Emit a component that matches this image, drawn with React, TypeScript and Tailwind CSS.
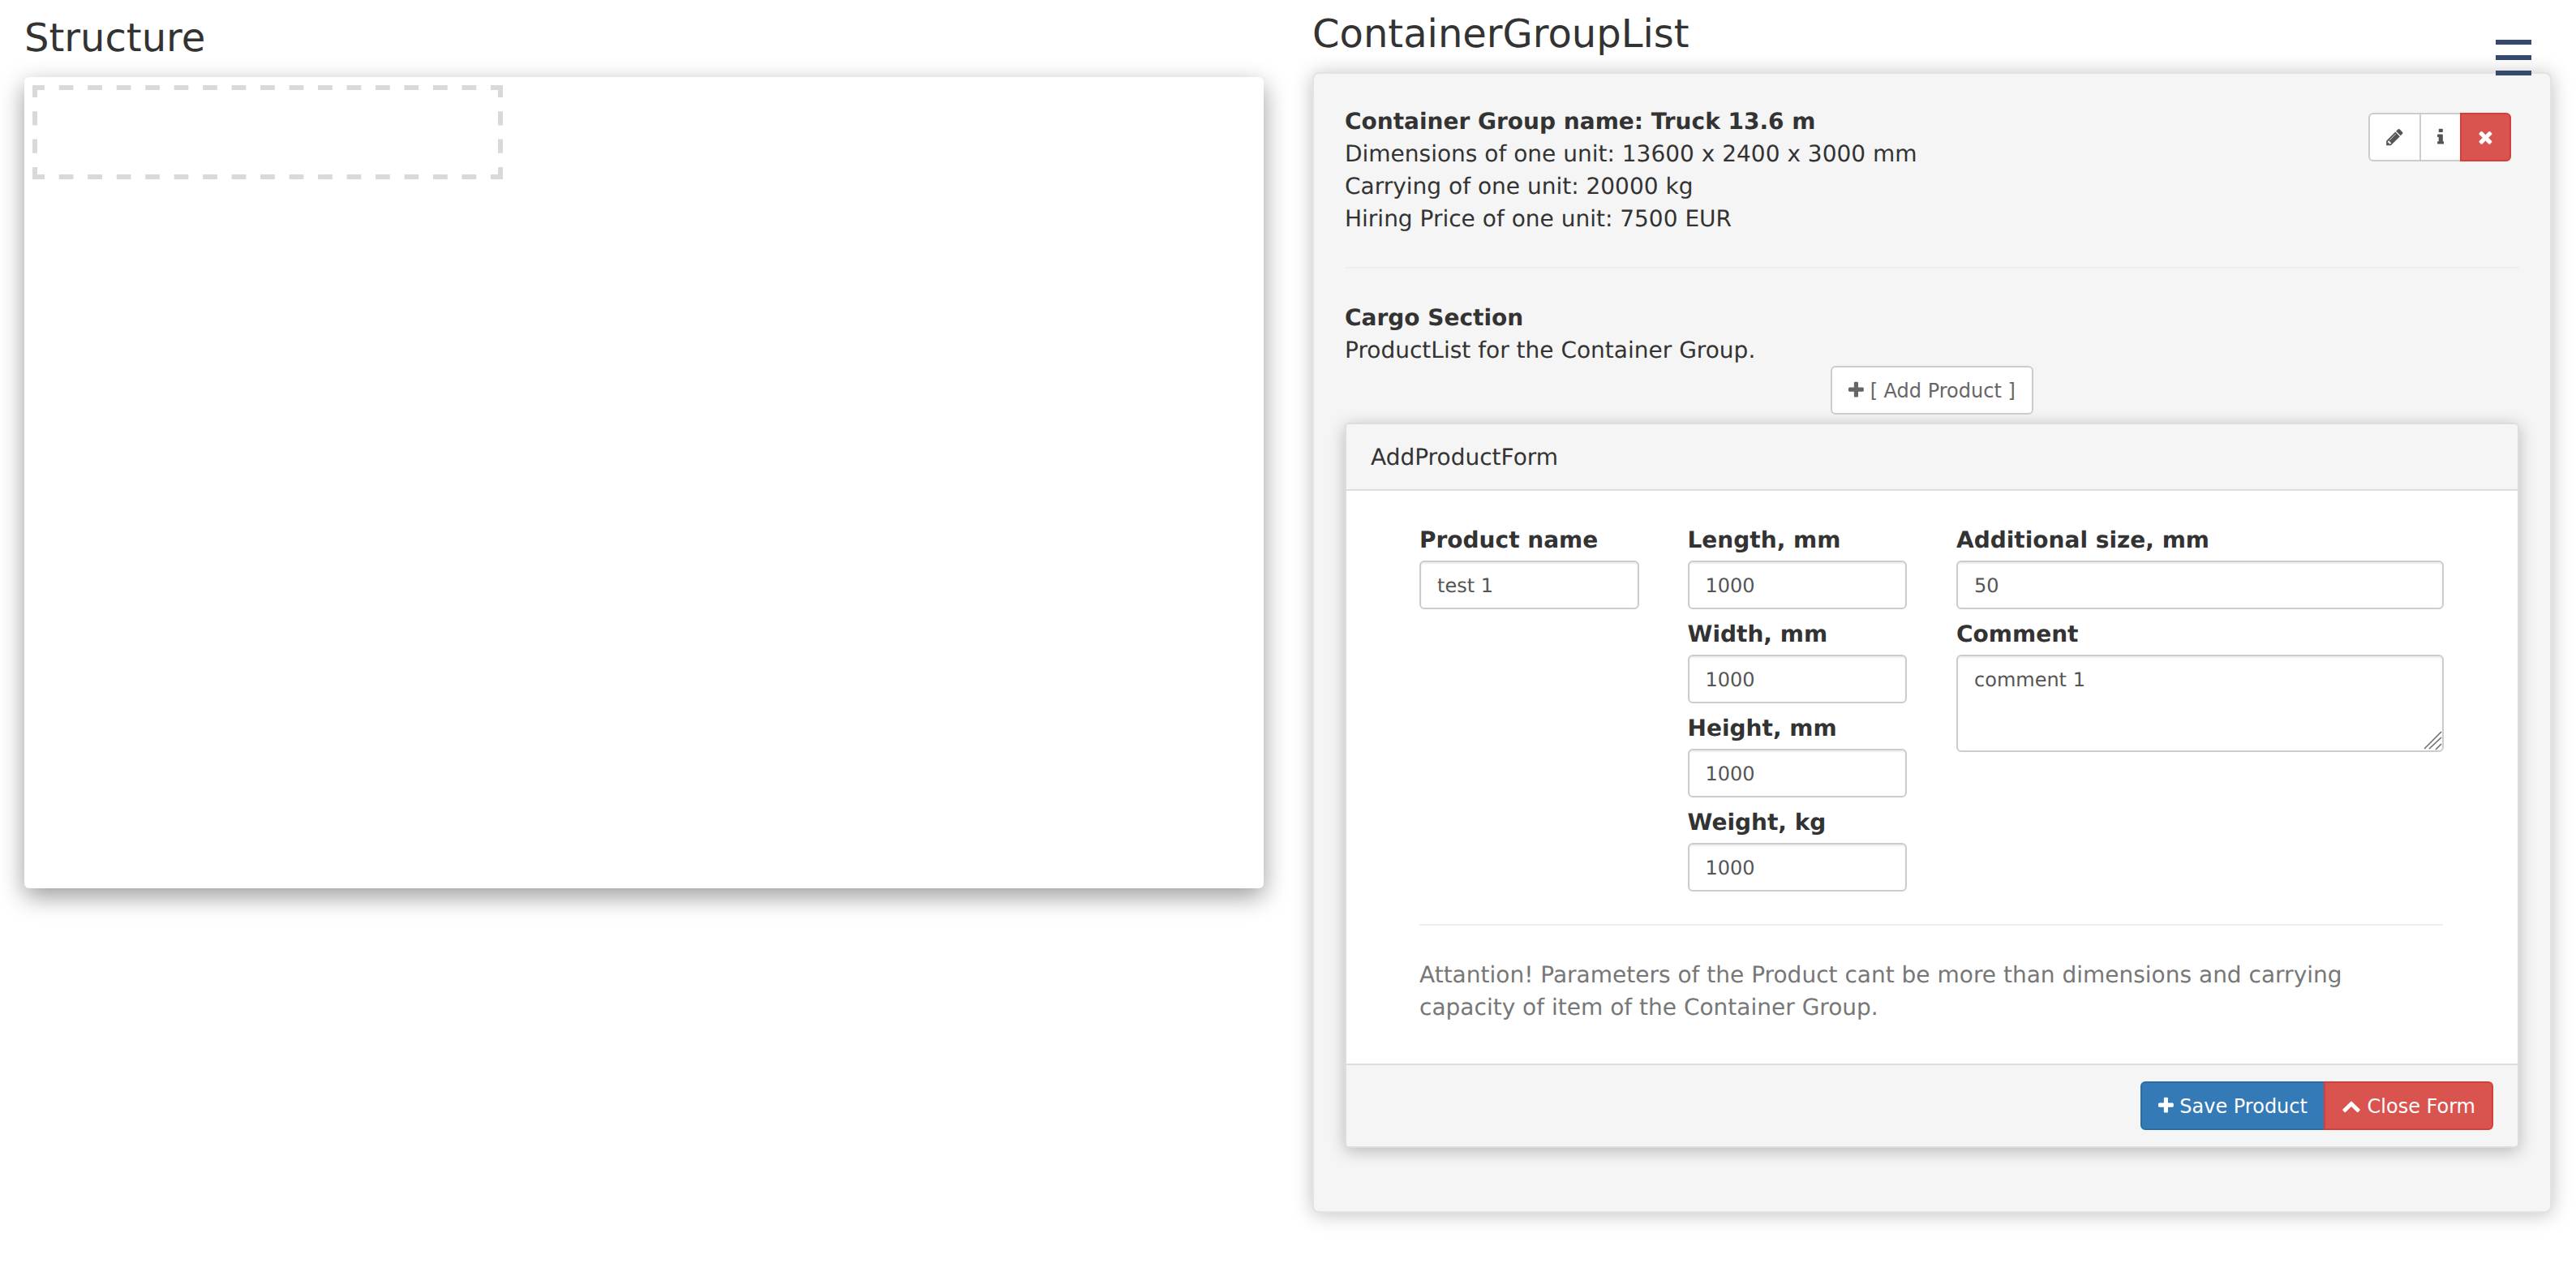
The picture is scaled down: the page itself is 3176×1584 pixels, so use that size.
import React from "react";

const P = {
  pencil: { vb: "118 0 1536 1792", w: 20.57, d: "M491 1536l91-91-235-235-91 91v107h128v128h107zm523-928q0-22-22-22-10 0-17 7l-542 542q-7 7-7 17 0 22 22 22 10 0 17-7l542-542q7-7 7-17zm-54-192l416 416-832 832h-416v-416zm683 96q0 53-37 90l-166 166-416-416 166-165q36-38 90-38 53 0 91 38l235 234q37 39 37 91z" },
  info: { vb: "576 0 640 1792", w: 8.57, d: "M1216 1344v128q0 26-19 45t-45 19h-512q-26 0-45-19t-19-45v-128q0-26 19-45t45-19h64v-384h-64q-26 0-45-19t-19-45v-128q0-26 19-45t45-19h384q26 0 45 19t19 45v576h64q26 0 45 19t19 45zm-128-1152v192q0 26-19 45t-45 19h-256q-26 0-45-19t-19-45v-192q0-26 19-45t45-19h256q26 0 45 19t19 45z" },
  times: { vb: "192 0 1408 1792", w: 18.86, d: "M1490 1322q0 40-28 68l-136 136q-28 28-68 28t-68-28l-294-294-294 294q-28 28-68 28t-68-28l-136-136q-28-28-28-68t28-68l294-294-294-294q-28-28-28-68t28-68l136-136q28-28 68-28t68 28l294 294 294-294q28-28 68-28t68 28l136 136q28 28 28 68t-28 68l-294 294 294 294q28 28 28 68z" },
  plus: { vb: "192 0 1408 1792", w: 18.86, d: "M1600 736v192q0 40-28 68t-68 28h-416v416q0 40-28 68t-68 28h-192q-40 0-68-28t-28-68v-416h-416q-40 0-68-28t-28-68v-192q0-40 28-68t68-28h416v-416q0-40 28-68t68-28h192q40 0 68 28t28 68v416h416q40 0 68 28t28 68z" },
  up: { vb: "0 0 1792 1792", w: 24, d: "M1683 1331l-166 165q-19 19-45 19t-45-19l-531-531-531 531q-19 19-45 19t-45-19l-166-165q-19-19-19-45.5t19-45.5l742-741q19-19 45-19t45 19l742 741q19 19 19 45.5t-19 45.5z" },
};

function Icon({ name }: { name: keyof typeof P }) {
  const i = P[name];
  return (
    <svg viewBox={i.vb} width={i.w} height={24} fill="currentColor" className="shrink-0">
      <path d={i.d} />
    </svg>
  );
}

const geo = "[text-rendering:geometricPrecision]";

function Field({ label, value, first }: { label: string; value: string; first?: boolean }) {
  return (
    <div className={first ? "" : "mt-[10px]"}>
      <label className="block h-[46px] pt-[1px] font-bold text-[28px] leading-[40px]">{label}</label>
      <input
        className="block w-full h-[60px] border-2 border-[#ccc] rounded-[6px] bg-white px-[20px] pt-[2px] text-[24px] leading-[36px] text-[#555] outline-none shadow-[inset_0_2px_2px_rgba(0,0,0,0.075)] [text-rendering:geometricPrecision]"
        defaultValue={value}
        readOnly
      />
    </div>
  );
}

export default function App() {
  return (
    <div className={`relative min-h-[1584px] bg-white flex font-['DejaVu_Sans',sans-serif] text-[#333] text-[28px] leading-[40px] ${geo}`}>
      <div className="absolute top-[49px] right-[55px] z-10 w-[44px] flex flex-col gap-[13px]">
        <span className="block h-[6px] bg-[#34496d]" />
        <span className="block h-[6px] bg-[#34496d]" />
        <span className="block h-[6px] bg-[#34496d]" />
      </div>

      <section className="w-[1588px] shrink-0 px-[30px] pt-[21px]">
        <h3 className="text-[48px] leading-[53px] mb-[21px] font-normal">Structure</h3>
        <div className="h-[1000px] bg-white rounded-[6px] p-[10px] shadow-[0_10px_30px_rgba(0,0,0,0.4)]">
          <svg width="580" height="116" className="block" stroke="#d9d9d9" strokeWidth="6" fill="none">
            <line x1="0" y1="3" x2="580" y2="3" strokeDasharray="17.74 17.74" strokeDashoffset="2.74" />
            <line x1="0" y1="113" x2="580" y2="113" strokeDasharray="17.74 17.74" strokeDashoffset="2.74" />
            <line x1="3" y1="0" x2="3" y2="116" strokeDasharray="17.2 17.2" strokeDashoffset="2.2" />
            <line x1="577" y1="0" x2="577" y2="116" strokeDasharray="17.2 17.2" strokeDashoffset="2.2" />
          </svg>
        </div>
      </section>

      <section className="flex-1 px-[30px] pt-[16px] pb-[89px]">
        <h3 className="text-[48px] leading-[53px] mb-[20px] font-normal">ContainerGroupList</h3>
        <div className="bg-[#f5f5f5] border-2 border-[#e3e3e3] rounded-[8px] p-[38px] shadow-[0_2px_24px_rgba(0,0,0,0.25)]">
          <div className="flex justify-between">
            <div className="pt-[1px]">
              <div className="font-bold">Container Group name: Truck 13.6 m</div>
              <div>Dimensions of one unit: 13600 x 2400 x 3000 mm</div>
              <div>Carrying of one unit: 20000 kg</div>
              <div>Hiring Price of one unit: 7500 EUR</div>
            </div>
            <div className="flex mt-[10px] mr-[10px] h-[60px]">
              <button className="flex items-center px-[20px] border-2 border-[#ccc] bg-white text-[#555] rounded-l-[6px]">
                <Icon name="pencil" />
              </button>
              <button className="-ml-[2px] flex items-center px-[20px] border-2 border-[#ccc] bg-white text-[#555]">
                <Icon name="info" />
              </button>
              <button className="-ml-[2px] flex items-center px-[20px] border-2 border-[#d43f3a] bg-[#d9534f] text-white rounded-r-[6px]">
                <Icon name="times" />
              </button>
            </div>
          </div>

          <hr className="mt-[39px] mb-[41px] border-0 border-t-2 border-[#eeeeee]" />

          <div className="font-bold">Cargo Section</div>
          <div>ProductList for the Container Group.</div>

          <div className="flex justify-center -mt-[1px] mb-[10px]">
            <button className="flex items-center gap-[7.6px] h-[60px] px-[20px] border-2 border-[#ccc] bg-white text-[#666] text-[24px] leading-[36px] rounded-[6px]">
              <Icon name="plus" />
              <span className="pt-[2px]">[ Add Product ]</span>
            </button>
          </div>

          <div className="mb-[40px] rounded-[6px] border-2 border-[#ddd] bg-white shadow-[0_4px_20px_rgba(0,0,0,0.25)]">
            <div className="h-[82px] bg-[#f5f5f5] border-b-2 border-[#ddd] rounded-t-[4px] px-[30px] pt-[21px]">AddProductForm</div>

            <div className="pl-[90px] pr-[91px] pt-[40px] pb-[49px]">
              <div className="flex">
                <div className="w-[270.5px] mr-[60px]">
                  <Field first label="Product name" value="test 1" />
                </div>
                <div className="w-[270.5px] mr-[61px]">
                  <Field first label="Length, mm" value="1000" />
                  <Field label="Width, mm" value="1000" />
                  <Field label="Height, mm" value="1000" />
                  <Field label="Weight, kg" value="1000" />
                </div>
                <div className="w-[601px]">
                  <Field first label="Additional size, mm" value="50" />
                  <div className="mt-[10px]">
                    <label className="block h-[46px] pt-[1px] font-bold">Comment</label>
                    <div className="relative">
                      <textarea
                        className="block w-full h-[120px] resize-none border-2 border-[#ccc] rounded-[6px] bg-white px-[20px] pt-[11px] pb-[9px] text-[24px] leading-[36px] text-[#555] outline-none shadow-[inset_0_2px_2px_rgba(0,0,0,0.075)] [text-rendering:geometricPrecision]"
                        defaultValue="comment 1"
                        readOnly
                      />
                      <svg width="24" height="24" className="absolute right-[2px] bottom-[2px] pointer-events-none" stroke="#6b6b6b" strokeWidth="1.6" fill="none">
                        <line x1="2" y1="22" x2="23" y2="1" />
                        <line x1="8" y1="22" x2="23" y2="8" />
                        <line x1="16" y1="23" x2="23" y2="16" />
                      </svg>
                    </div>
                  </div>
                </div>
              </div>
              <hr className="mt-[40px] mb-[41px] mr-[1px] border-0 border-t-2 border-[#eeeeee]" />
              <p className="text-[#777]">
                Attantion! Parameters of the Product cant be more than dimensions and carrying capacity of item of the Container Group.
              </p>
            </div>

            <div className="h-[102px] flex justify-end bg-[#f5f5f5] border-t-2 border-[#ddd] rounded-b-[4px] px-[30px] py-[20px] text-[24px] leading-[36px] text-white">
              <button className="flex items-center gap-[7.6px] h-[60px] px-[20px] border-2 border-[#2e6da4] bg-[#337ab7] rounded-l-[6px]">
                <Icon name="plus" />
                <span className="pt-[2px]">Save Product</span>
              </button>
              <button className="-ml-[2px] flex items-center gap-[7.6px] h-[60px] px-[20px] border-2 border-[#d43f3a] bg-[#d9534f] rounded-r-[6px]">
                <Icon name="up" />
                <span className="pt-[2px]">Close Form</span>
              </button>
            </div>
          </div>
        </div>
      </section>
    </div>
  );
}
